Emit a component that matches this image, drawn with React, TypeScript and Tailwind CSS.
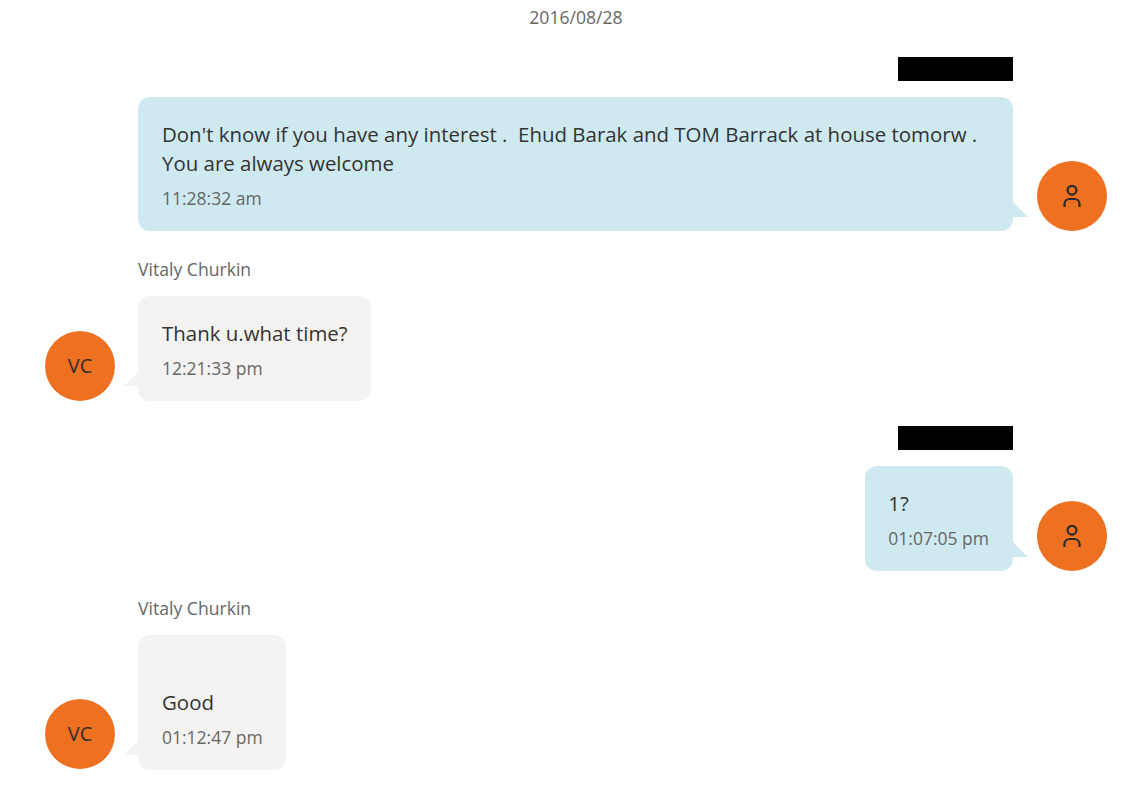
const font = { fontFamily: '"Open Sans", sans-serif' };

function UserIcon() {
  return (
    <svg width="20" height="26" viewBox="0 0 20 26" fill="none" stroke="#2b2b2b" strokeWidth="2.2">
      <circle cx="10" cy="7.2" r="4.4" />
      <path d="M2.5 24 V21 A5 5 0 0 1 7.5 16 H12.5 A5 5 0 0 1 17.5 21 V24" />
    </svg>
  );
}

function Avatar({ children, lifted }: { children: React.ReactNode; lifted?: boolean }) {
  return (
    <div
      className={`flex h-[70px] w-[70px] shrink-0 items-center justify-center rounded-full bg-[#ee7021] text-[20px] text-[#2f2f2f] ${lifted ? "mb-px" : ""}`}
    >
      {children}
    </div>
  );
}

function Bubble({
  side,
  text,
  time,
  wide,
  tall,
}: {
  side: "left" | "right";
  text: string;
  time: string;
  wide?: boolean;
  tall?: boolean;
}) {
  const right = side === "right";
  return (
    <div
      className={`relative rounded-[12px] pb-[21px] ${tall ? "pt-[24px]" : "pt-[23px]"} ${
        right ? "bg-[#cfe9f0] pr-6" : "bg-[#f4f3f2] pl-6 pr-[23px]"
      } ${right && !wide ? "pl-[23px]" : ""} ${wide ? "w-[875px] pl-6" : ""}`}
    >
      <div className="text-[20.45px] leading-[29px] whitespace-pre-wrap text-[#333333]">{text}</div>
      <div className="mt-[8px] text-[17.5px] leading-[24px] text-[#666666]">{time}</div>
      {right ? (
        <svg className="absolute right-[-15px] bottom-[14px]" width="15" height="15" viewBox="0 0 15 15">
          <path d="M0 0 L15 15 H0 Z" fill="#cfe9f0" />
        </svg>
      ) : (
        <svg className="absolute left-[-14px] bottom-[15px]" width="14" height="14" viewBox="0 0 14 14">
          <path d="M14 0 L0 14 H14 Z" fill="#f4f3f2" />
        </svg>
      )}
    </div>
  );
}

function Mine({ text, time, wide }: { text: string; time: string; wide?: boolean }) {
  return (
    <div className="flex flex-col">
      <div className="mr-[133px] h-[24px] w-[115px] self-end bg-black" />
      <div className="mt-[16px] flex items-end justify-end gap-6 pr-[39px]">
        <Bubble side="right" text={text} time={time} wide={wide} />
        <Avatar>
          <UserIcon />
        </Avatar>
      </div>
    </div>
  );
}

function Theirs({ text, time, tall }: { text: string; time: string; tall?: boolean }) {
  return (
    <div className="flex flex-col">
      <div className="ml-[138px] text-[17.6px] leading-[24px] text-[#666666]">Vitaly Churkin</div>
      <div className="mt-[15px] flex items-end gap-[23px] pl-[45px]">
        <Avatar lifted={tall}>VC</Avatar>
        <Bubble side="left" text={text} time={time} tall={tall} />
      </div>
    </div>
  );
}

export default function App() {
  return (
    <div className="h-[792px] w-[1146px] overflow-hidden bg-white" style={font}>
      <div className="pt-[6px] pl-[6px] text-center text-[17.6px] leading-[23px] text-[#666666]">2016/08/28</div>
      <div className="mt-[28px] flex flex-col">
        <Mine
          wide
          text={"Don't know if you have any interest .  Ehud Barak and TOM Barrack at house tomorw .\nYou are always welcome"}
          time="11:28:32 am"
        />
        <div className="mt-[26px]">
          <Theirs text="Thank u.what time?" time="12:21:33 pm" />
        </div>
        <div className="mt-[25px]">
          <Mine text="1?" time="01:07:05 pm" />
        </div>
        <div className="mt-[25px]">
          <Theirs tall text={"\nGood"} time="01:12:47 pm" />
        </div>
      </div>
    </div>
  );
}
